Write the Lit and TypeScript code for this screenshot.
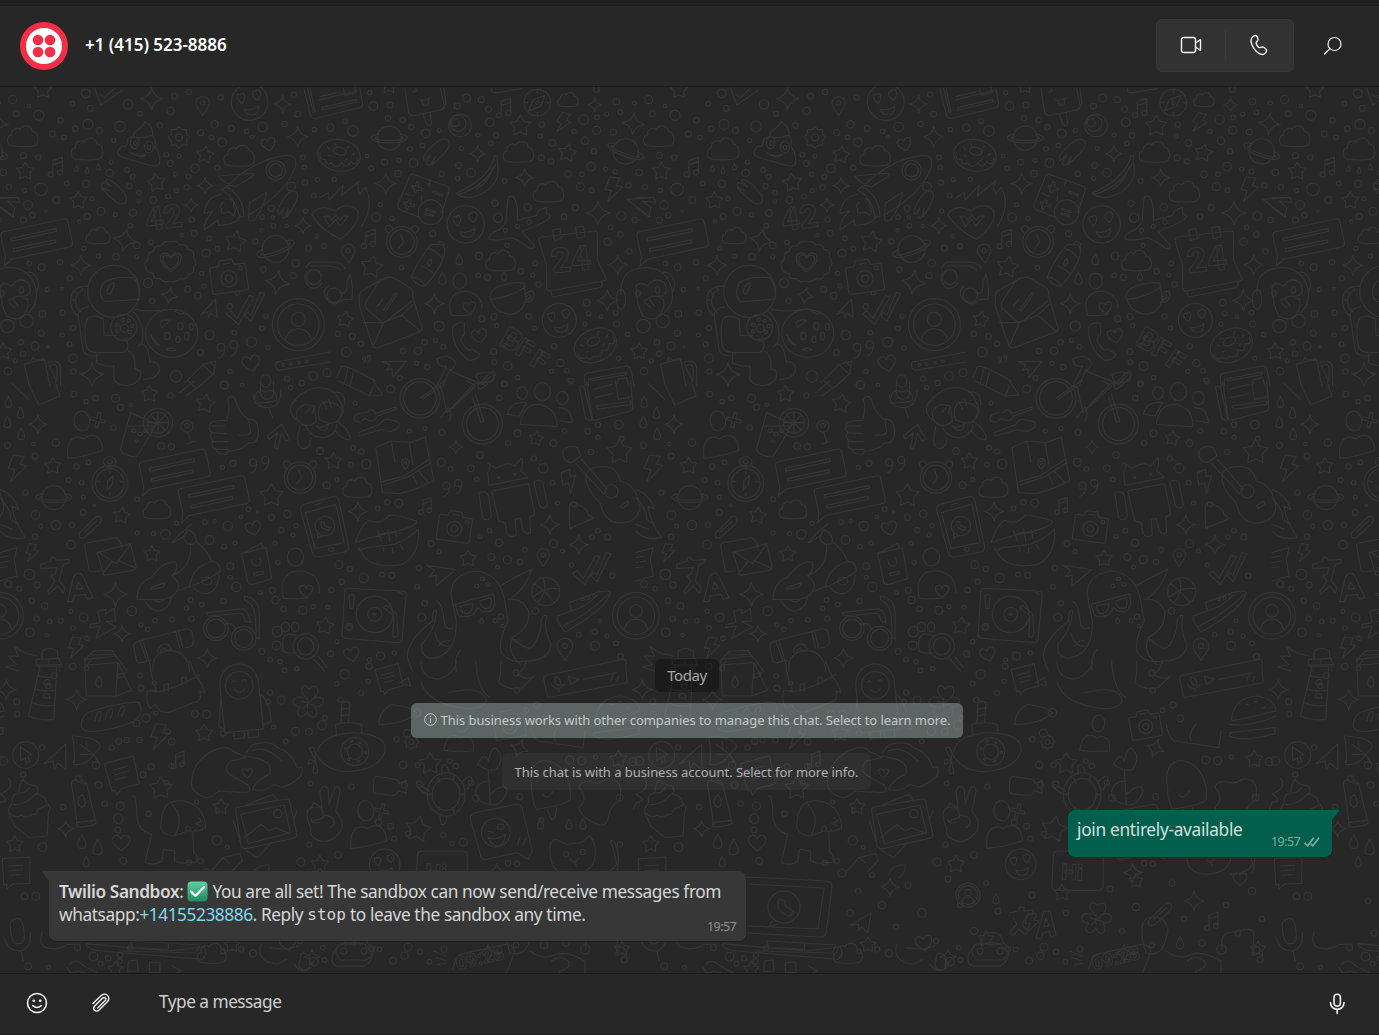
import { LitElement, html, svg, css } from "lit";
import { customElement } from "lit/decorators.js";

type Stamp = [string, number, number, number, number?];
interface Sheet {
  ox: number; oy: number; sx: number; sy: number;
  dots: number[]; stamps: Stamp[]; paths: string[];
  words?: [string, number, number, number, number][];
}

const star = (n: number, inner: number) => {
  let d = "";
  for (let i = 0; i < n * 2; i++) {
    const a = (Math.PI * i) / n - Math.PI / 2;
    const r = i % 2 ? inner : 10;
    d += (i ? "L" : "M") + (r * Math.cos(a)).toFixed(2) + " " + (r * Math.sin(a)).toFixed(2);
  }
  return d + "Z";
};
const ring = (x: number, y: number, r: number, ry = r) =>
  `M${x - r} ${y}a${r} ${ry} 0 1 0 ${2 * r} 0a${r} ${ry} 0 1 0 ${-2 * r} 0`;

/* Doodles drawn in a box of about 20 units, centred on the origin. */
const SHAPES: Record<string, string> = {
  star: star(5, 5.4),
  spark: "M0-10Q1.2-2 10 0Q1.2 2 0 10Q-1.2 2-10 0Q-1.2-2 0-10Z",
  cloud: "M-7 6.5C-11 6-11 0-7.5-.5C-8-5-3-6-2-4C0-8 6-7 6-3C10-3 11.500 5 7 6.500Q0 7.500-7 6.500Z",
  heart: "M0 9C-6 4-10 1-9.500-4C-9-9-2-10 0-4C2-10 9-9 9.500-4C10 1 6 4 0 9Z",
  drop: "M0-10C2-5 6-1 5.500 4C5 10-5 10-5.500 4C-6-1-2-5 0-10Z",
  note: "M-3 6V-6L6-9V4M-3-2L6-5" + ring(-5, 7, 2.4) + ring(3.8, 5, 2.4),
  bolt: "M-3-10L5-9L2-3L7-2L-5 10L-2 1L-7 0Z",
  pin: "M0 10C-3 4-7 1-7-3C-7-12 7-12 7-3C7 1 3 4 0 10Z" + ring(0, -3, 2.2),
  checks: "M-10 4L-7 2L-3 7L5-8L8-7L-2 11ZM2 5L4 3L6 5L12-10L15-9L6 9Z",
  love: ring(0, 0, 10) + "M-4 1C-7-1-8-5-5-4C-4-6-1-4-4 1ZM4-1C1-3 1-6 3-6C5-8 8-5 4-1ZM-3 4Q2 5 5 2Q5 7 1 7Q-2 7-3 4Z",
  planet: ring(0, 0, 10) + "M-9-3C-18-3-18 4 0 4S18-3 9-3M-10-1C-14 0-12 2 0 2S14 0 10-1",
  donut: ring(0, 0, 10, 7.4) + ring(0, -2, 3, 1.800) + "M-9 0Q-9 4-6 3Q-5 6-3 4Q0 7 2 3Q4 6 6 2Q9 4 9 0M-6-3l1 1M-3-5l1 1M4-5l-1 1M6-1l1-1M-5 1h1M3 2l1-1",
  camera: "M-10-5Q-10-6-9-6H-5L-4-9H3L4-6H9Q10-6 10-5V8Q10 9 9 9H-9Q-10 9-10 8Z" + ring(0, 1.500, 4.500) + ring(0, 1.500, 2) + ring(7, -3.500, 1) + "M-2-7H2",
  clock: ring(0, 0, 10) + ring(0, 0, 8) + "M-1-5L1 0L-2 4M-9-6C-13-9-9-13-6-9M9-6C13-9 9-13 6-9",
  person: ring(0, 0, 10) + ring(0, 0, 8) + ring(0, -2, 2.700) + "M-5 6C-4 0 4 0 5 6",
  bust: ring(0, -6, 3.500, 4.500) + "M-8 10C-8 0-3 0 0 2C3 0 8 0 8 8Q0 10-8 10Z",
  bubble: "M-9.600-3Q-9.600-4 -8.600-4H8.600Q9.600-4 9.600-3V3Q9.600 4 8.600 4H-8L-10.500 5.500L-9.600 3ZM-7-1.800H6V-1H-7ZM-7 1.200H5V2H-7Z",
  page: "M-9-9H9L8 8H-3L-7 11V8H-9ZM-5-4H4M-5-1H4M-5 2H2",
  smear: "M-9-4Q-11-8-7-7L-2-5L-7-9Q-5-12 4-5Q12 1 9 5Q6 8-2 2L-9-3L-3-2Z",
  gear: star(8, 7.500) + ring(0, 0, 3.200),
  quote: ring(-5, -3, 3) + ring(5, -5, 3) + "M-2-3Q-2 4-7 6M8-5Q8 2 3 4",
  plane: "M-10 2L8-9L5 9L0 3L-3 7L-3 1Z",
  plus: "M-1.500-8H1.500V-1.500H8V1.500H1.500V8H-1.500V1.500H-8V-1.500H-1.500Z",
  clip: "M-9 6L4-7Q8-10 9-6Q10-4 7-1L-4 9Q-10 12-9 6ZM-5 5L5-4",
  ball: ring(0, 0, 10) + "M-8-6Q0 0 6 8M-2-10Q2 0-6 8M10-2Q0-4-9 4",
  flower: "M0-2C-8-10-2-14 1-9C5-14 10-8 4-3C12-6 13 3 5 3C9 9 2 13 0 6C-4 13-10 7-5 3C-13 2-10-6-3-3M0-3V4M-4-1L5 2M4-3L-3 4",
  ghost: "M-5.500 9V-4C-5.500-12 5.500-12 5.500-4V9ZM-5.500-1L-7 7L-5.500 8M5.500-1Q8 1 8 7L5.500 8" + ring(0, -4, 3.900) + "M-2-5Q-1.500-6-1-5M1-5Q1.500-6 2-5M-1.500-3Q0-1 1.500-3M-3 9V11H0V9M1 9V11H4V9",
};

const SHEETS: Sheet[] = [
  {
    ox: 0, oy: 85, sx: 3, sy: 3,
    dots: [38,41,12,87,60,5,49,83,9,117,88,15,181,103,8,257,22,13,217,53,7,271,67,9,384,55,14,420,83,7,524,30,9,512,75,11,567,18,8,662,34,8,643,115,11,694,127,9,740,136,7,756,152,5,788,123,14,854,114,8,893,84,9,882,26,8,943,131,6,602,140,9,635,154,7,666,169,13,264,115,15,226,128,8,298,134,9,360,121,16,341,163,6,479,118,8,157,144,9,192,154,7,70,209,9,115,214,8,10,259,10,27,303,8,73,313,6,123,310,19,200,292,7,258,293,11,334,228,6,329,261,11,381,252,7,398,272,7,388,300,8,417,320,7,416,346,5,460,342,10,504,331,7,529,314,6,499,206,7,537,210,6,511,232,9,527,264,6,565,272,7,560,304,8,585,247,13,652,245,8,575,401,8,583,442,9,545,448,5,627,457,7,652,488,7,618,501,12,766,466,8,785,433,5,820,419,7,860,420,5,786,393,7,819,394,5,814,367,9,873,302,13,915,290,8,909,214,7,913,244,7,952,281,6,941,329,7,917,375,6,925,486,9,949,451,5,84,357,13,169,342,10,276,338,6,303,376,12,346,386,6,399,381,10,391,419,7,262,391,9,238,407,5,97,388,8,138,377,4,70,402,9,251,487,6,295,510,6,348,512,10,410,478,10,453,469,7,410,512,6,180,529,8,125,544,10,88,532,7,209,577,8,142,611,6,186,608,4,444,591,14,457,645,8,563,610,9,593,629,10,612,600,6,605,562,6,689,661,8,712,621,6,790,550,8,879,569,9,887,532,11,798,690,6,786,727,7,703,740,7,755,768,15,804,785,6,629,747,14,601,799,9,690,856,6,528,871,17,672,896,12,188,680,8,127,684,10,219,726,8,124,741,9,187,747,6,209,775,7,219,817,13,220,857,8,105,780,12,63,769,8,69,803,8,144,782,3,46,824,6,24,856,11,861,878,8,939,870,13],
    stamps: [["star",129,12,27],["star",76,256,28],["star",235,344,27],["star",469,290,29,-8],["star",615,207,27,8],["star",706,468,33,10],["star",10,797,26],["spark",455,38,34],["spark",848,54,26],["spark",893,153,31],["spark",615,299,25],["spark",573,357,21],["spark",375,462,35,10],["spark",243,538,30],["spark",508,629,25,10],["spark",909,419,25],["spark",832,589,36,8],["spark",276,866,36],["cloud",69,150,46],["cloud",262,188,48],["cloud",718,208,46],["cloud",295,448,36],["heart",806,175,22,-15],["heart",512,528,33],["heart",512,528,25],["heart",754,832,27,-12],["note",168,243,32],["checks",725,665,46],["drop",229,248,10],["drop",261,254,10],["drop",295,243,10],["pin",608,60,29],["love",749,48,55],["planet",827,489,40,-20],["camera",686,570,54,-8],["person",895,716,78],["bubble",110,460,107,-12],["smear",340,325,42,8],["smear",871,355,40,-95],["gear",537,154,33],["quote",682,795,38],["plane",630,672,30,-15],["bust",797,910,42]],
    paths: [
      "M284 6L302 57L368 12M300 25L312 35L342 8M0 335H55L58 350L20 345L45 365L38 392L0 365",
      "M399 152C400 130 430 130 434 106C450 118 460 125 458 148Q470 160 465 182Q483 205 478 235Q470 245 440 235L370 215Q340 205 366 180Q380 185 382 170Q380 155 399 152ZM392 200Q415 215 438 205Q430 222 392 200Z" + ring(404, 170, 13, 18) + ring(447, 183, 13, 18) + ring(406, 172, 5, 7) + ring(447, 184, 5, 7) + "M400 152Q425 160 457 148",
      "M724 263Q790 215 860 208Q895 208 885 245Q860 320 744 388M724 263L678 302Q730 330 732 390L718 394Q705 330 665 312L678 302M655 270Q700 265 757 262Q765 265 755 272L706 303Q670 290 655 270ZM800 318L748 352L746 400Q752 410 765 400Q792 365 800 318ZM665 325Q620 330 612 383L640 375Q610 405 612 432L655 402L655 418Q720 415 718 385M670 347Q655 360 665 368M688 338Q705 345 700 362Q712 368 700 390Q692 375 680 380Q660 385 665 370" + ring(827, 253, 29) + ring(827, 253, 20),
      ring(341, 616, 78) + "M417 640Q370 643 315 647Q290 625 310 590Q340 570 400 575Q420 595 417 640M322 622Q320 600 342 590Q345 600 330 625ZM262 600Q210 600 212 650Q215 680 235 690M248 612Q225 620 227 650Q230 670 243 678M213 640L227 643M220 615L234 625M243 602L249 612M235 693Q230 670 265 662M235 693L250 795Q260 812 290 810M258 775Q250 710 265 695Q290 685 310 700L312 748H350M258 775Q260 798 290 800H370Q390 790 382 767L365 762L382 755M290 800V830Q310 842 342 840V880Q350 900 385 898Q425 890 422 860Q415 848 405 850V830Q400 800 385 795M405 670Q460 680 500 670M398 675Q440 720 425 770L412 782M425 775Q445 775 450 828Q480 825 478 855Q470 880 430 880" + ring(371, 724, 39) + ring(373, 727, 12) + ring(352, 716, 5) + ring(368, 702, 5) + ring(386, 704, 5) + ring(397, 720, 5) + ring(389, 738, 5) + ring(352, 736, 5),
      ring(515, 742, 78, 72) + "M480 710Q490 698 512 703L485 725ZM453 745Q465 770 480 778Q460 778 453 745M525 675Q545 690 555 678M500 790Q515 782 528 792Q515 798 500 790" + ring(541, 720, 8, 11) + ring(502, 750, 8, 11) + ring(534, 760, 6, 10) + ring(560, 750, 6, 12) + ring(574, 722, 6, 10),
      "M437 545Q430 530 445 520Q440 500 460 496Q462 478 482 480Q495 462 510 468Q530 462 540 477Q560 472 563 490Q585 492 580 515Q595 530 580 545Q585 562 565 565Q560 585 540 577Q525 592 507 585Q490 592 480 577Q458 582 460 562Q440 562 437 545Z",
      "M-45 625Q-50 545 30 545Q85 545 105 600Q120 650 85 680M75 562Q100 550 113 582Q120 600 108 620M0 600Q10 585 35 600Q55 570 85 590Q100 620 78 630L60 630L82 640Q90 660 70 690Q50 708 20 690Q0 650 0 600M25 645Q45 630 60 630M40 640L55 660M27 650L45 665" + ring(64, 612, 7, 10) + ring(6, 622, 7, 8) + ring(22, 720, 20) + ring(80, 705, 20) + ring(-45, 640, 14, 30),
      "M73 835Q100 825 134 820L150 900M73 835L88 900M95 823L98 815L110 822L130 817L134 825M143 830Q180 815 182 850V900M150 840Q170 828 172 850L170 885L146 837M555 890L610 835L647 825L642 862L600 900M606 833L640 866M565 885L590 908M630 828L645 842M830 828L990 798M835 853L990 828M830 828Q820 840 835 853" + ring(850, 837, 4) + ring(872, 833, 4) + ring(897, 830, 4) + ring(921, 826, 4),
      "M912 8L932 90Q938 100 950 96L1083 64Q1090 60 1087 50L1080 8M923 8L940 80M930 6L945 78M960 32L1020 18M958 42L1070 14M965 65L1070 40V48L966 72ZM1030 8L1035 28L1068 20L1064 4",
      "M917 545L932 528H1000Q1030 530 1035 548M932 540H995Q1020 545 1022 555M920 555Q905 580 930 605Q955 610 965 590M985 600Q960 620 985 645Q1010 665 1030 640L1056 640Q1060 600 1050 565L1040 590Q1045 630 1020 620" + ring(942, 573, 22) + ring(1003, 628, 22),
    ],
    words: [["42", 440, 436, 96, -8]],
  },
  {
    ox: 320, oy: 85, sx: 3, sy: 3,
    dots: [149,20,6,160,60,13,210,57,9,75,105,7,31,125,11,99,135,16,204,97,8,248,102,8,274,123,8,317,142,13,358,133,6,412,60,9,440,36,12,484,41,9,506,70,9,509,109,13,474,147,6,528,148,8,513,172,7,424,187,6,307,178,7,270,189,7,280,231,13,237,223,6,194,228,9,141,210,5,154,247,7,234,263,10,43,280,6,365,264,8,416,238,9,453,260,13,413,277,6,554,285,7,181,356,6,168,394,13,216,397,6,338,443,9,12,480,7,244,545,7,477,510,11,475,568,7,502,574,9,561,478,6,602,556,8,638,567,6,646,532,7,656,595,8,525,351,9,534,395,14,623,364,11,556,433,6,592,421,6,627,408,7,732,392,8,766,365,9,781,302,12,815,313,7,744,265,10,786,265,7,813,242,13,857,249,6,886,257,7,925,298,8,664,215,9,693,226,8,822,196,8,795,164,11,697,171,10,661,150,6,665,116,8,762,136,6,791,101,14,830,133,12,831,94,7,880,138,9,860,84,6,901,79,7,943,51,6,889,47,10,829,10,9,904,390,13,944,402,8,872,424,7,901,446,8,863,467,11,928,496,8,800,650,10,806,682,7,842,692,5,887,680,7,890,714,9,795,714,6,923,745,6,896,817,6,741,854,7,752,884,8,702,781,8,721,831,11,695,856,6,643,726,6,626,691,8,563,840,13,523,828,7,521,797,9,530,719,6,522,692,9,485,698,9,593,875,6,553,893,9,358,720,15,314,769,8,347,763,6,370,782,7,294,795,11,249,795,8,289,832,6,322,843,8,239,876,7,123,773,8,97,751,9,53,744,8,79,798,14,21,860,12],
    stamps: [["star",207,0,25],["star",601,120,33],["star",742,201,28,10],["star",155,543,34,10],["star",75,701,25,8],["spark",824,57,21],["spark",940,113,33,5],["spark",473,203,24],["spark",614,275,27],["spark",197,293,32],["spark",834,381,36],["spark",893,537,30],["spark",343,653,30],["spark",862,643,32],["cloud",744,40,31],["cloud",596,197,46],["cloud",686,316,46],["cloud",542,523,45],["heart",478,750,24,-12],["heart",449,665,20,-8],["note",553,65,32],["note",147,458,32],["bolt",731,110,30,12],["bolt",881,310,37],["drop",418,521,18],["drop",367,578,20],["drop",552,571,14],["pin",85,503,29,-5],["love",437,415,56],["love",718,703,51],["planet",208,156,36],["planet",917,196,38,20],["donut",57,208,64,10],["donut",826,778,66,-25],["smear",357,200,44,-80],["clock",246,468,46],["quote",140,822,16],["plane",220,838,34,30],["clip",500,880,28]],
    paths: [
      "M255 8L266 80Q270 90 285 88L360 72Q375 70 373 60L362 8M360 75L378 55L372 8M310 86L320 115Q330 125 335 110L330 80M298 40Q310 48 328 35M305 44Q310 65 325 55V38M285 8L290 14L280 18",
      ring(420, 118, 34) + ring(414, 112, 24) + ring(406, 110, 12) + ring(652, 50, 40) + "M625 75L640 42L675 28L662 60ZM652 14V20M652 80V86M617 50h6M682 50h6" + ring(652, 50, 5),
      "M270 268Q275 263 285 267L380 300Q390 305 387 315L365 380M270 268L234 355Q232 367 242 372L300 395M330 285L325 300M305 330L303 345M258 323L280 330M277 298L286 302L290 287L298 290L295 303L307 307L304 315L292 312L287 320L281 316L284 308L276 305ZM254 348L262 350L267 340L274 343L270 352L285 357L282 363L268 360L262 370L256 367L261 357L252 354ZM340 315L368 325L366 330L338 320Z" + ring(332, 379, 37) + "M318 367L345 375V380L316 372ZM316 380L340 387V392L315 385Z",
      "M408 322Q500 280 520 225L525 208L532 210V228Q550 300 465 332Q430 340 408 322ZM415 325Q490 305 527 235M470 310Q510 285 518 245",
      "M563 345Q565 325 580 332Q595 350 592 403L650 388Q650 370 680 365V382L692 390Q690 405 605 437L640 475Q645 490 630 488Q600 465 575 455Q540 465 508 460Q500 445 540 430L558 410Z",
      "M657 463Q655 455 665 453L825 435Q833 435 832 445V520L857 575Q860 583 850 585L690 615Q680 615 680 605V540L657 463ZM693 617L697 633L840 605Q850 600 845 585M698 432L720 428L725 458L703 463ZM767 424L790 421L795 452L772 457Z",
      "M356 475Q375 475 374 495Q370 540 315 600Q295 603 273 575Q300 510 335 475ZM352 476L360 465L374 474L370 485M325 488Q345 490 365 515M305 540Q330 550 342 565M275 573Q300 575 315 598M325 540Q318 530 332 518Q340 532 325 540",
      "M118 640Q115 625 125 615L190 578Q210 570 225 578L270 605Q280 615 278 630L306 725Q308 735 298 738L175 785Q162 788 158 778L118 660ZM137 665Q133 655 140 645L175 590Q185 578 210 573M137 665L185 708Q190 712 200 705L275 645M130 710H190L160 780M185 710L245 688L300 735M245 688L280 655M172 660L188 640M190 672L228 620L232 625L196 675Z",
      ring(419, 585, 20, 24) + "M395 688Q380 645 405 625Q435 607 465 625Q490 645 485 665M395 688Q430 690 455 685",
      "M510 632Q510 612 540 600Q590 585 612 592L618 640Q610 680 570 685Q520 680 510 632ZM512 640Q570 635 616 602M616 625Q640 605 642 625Q640 650 613 648M620 632Q630 620 633 630Q630 640 618 642",
      "M398 725Q410 705 433 712V745Q415 760 430 775Q445 800 455 788L480 805Q470 825 445 822Q395 785 398 725Z",
      "M0 335L24 320L28 342L70 297L64 330L118 285Q108 305 120 325L135 303Q165 355 125 420M62 460Q0 430-25 385Q0 350 45 375Q80 345 110 370Q130 405 62 460ZM12 390L28 422L48 400L60 420L85 390H70L60 402L48 388L35 402L28 390Z",
      "M350 820Q380 800 405 825Q410 840 390 855L445 878L500 900M350 820Q355 845 380 840L350 900M390 850L370 900M468 865Q500 850 520 865Q530 885 500 890Q470 895 468 865M50 875L65 842Q80 835 165 885M83 850L72 895M100 858L90 900",
      "M795 900L793 875Q793 865 800 862L920 840Q930 840 933 850L942 900M805 900V880L918 858V866L812 885M890 895L895 880L920 875L925 895",
      "M515 8Q510 20 530 20L605 8M920 340L990 335M920 340L990 392",
    ],
    words: [["24", 696, 562, 104, -6], ["B", 535, 775, 90, 28], ["F", 582, 802, 80, 30], ["F", 625, 835, 80, 32]],
  },
  {
    ox: 0, oy: 380, sx: 2.45, sy: 3,
    dots: [181,39,9,234,51,8,211,62,6,283,52,12,295,79,9,320,71,5,418,44,8,550,13,12,593,12,5,712,20,6,957,24,12,870,66,6,739,6,8,1236,10,7,1223,51,8,1398,5,4,1383,150,7,1440,151,8,1465,131,8,1516,131,13,1523,173,7,1465,169,6,1356,187,10,1448,213,8,1268,157,10,1245,186,8,1083,154,9,1041,142,6,1003,150,6,1176,222,10,1081,244,12,1104,264,7,1153,262,10,1168,295,7,1308,233,8,1331,262,14,1354,305,7,1366,366,6,865,200,7,885,212,8,784,210,10,897,249,14,860,251,7,825,296,6,800,313,10,704,399,11,665,409,9,631,393,4,609,385,7,590,408,5,689,447,8,725,434,6,718,462,6,674,487,6,558,435,14,513,477,13,526,421,5,502,423,7,432,427,6,405,460,14,376,458,6,336,456,6,336,355,7,204,394,9,231,373,4,204,348,6,168,297,7,200,305,7,187,257,8,217,244,7,86,225,9,62,335,8,87,402,13,137,432,14,99,435,6,176,432,8,86,467,8,174,491,13,137,185,11,82,189,5,18,193,9,278,140,8,395,195,10,420,197,9,571,247,9,545,259,6,72,580,16,20,609,10,91,612,9,47,623,7,78,659,8,109,675,10,174,691,6,90,713,8,122,722,6,149,719,7,205,709,13,179,741,7,73,754,13,114,762,5,213,772,7,178,856,10,323,690,14,345,731,6,362,745,7,380,718,7,421,716,7,469,713,8,457,682,6,467,657,7,494,670,7,548,660,8,579,618,14,564,555,10,564,588,6,576,486,6,549,497,7,681,544,6,675,657,11,638,634,6,667,628,9,695,684,8,742,688,12,767,677,6,803,679,6,812,627,8,837,602,8,830,551,12,857,564,8,891,591,14,936,581,7,960,583,9,1026,561,8,1076,512,6,1056,488,9,1022,617,7,1041,667,8,1033,709,12,977,366,12,949,364,8,925,382,7,856,738,10,825,782,6,810,818,9,642,811,9,662,836,7,686,842,6,726,863,6,905,836,6,932,825,12,966,816,6,1204,528,10,1243,536,12,1274,543,8,1219,558,6,1223,485,11,1176,466,6,1199,449,7,1286,506,7,1356,488,12,1400,552,6,1465,449,7,1450,468,7,1489,468,9,1500,584,8,1312,690,10,1378,510,6,1232,735,5,1227,707,8,1213,719,6,1457,752,8,1418,761,7,1458,794,13,1487,765,6,1509,787,7,1470,719,5,1520,827,9],
    stamps: [["star",366,39,26],["star",503,68,29,10],["star",129,255,26],["star",298,404,26,8],["star",372,519,25],["star",665,344,36],["star",817,241,26],["star",1314,173,23,10],["star",1518,213,39],["star",1147,533,26],["star",796,735,27,8],["spark",93,130,28],["spark",1117,198,21],["spark",877,391,29],["spark",1347,431,29],["spark",1418,491,29],["spark",283,640,36],["spark",299,758,25],["spark",508,831,29],["cloud",876,318,44],["cloud",385,384,42],["heart",621,442,24,-15],["heart",862,820,24,-15],["heart",750,630,21],["note",1043,374,28],["bolt",43,262,40],["bolt",79,515,27],["bolt",186,800,32],["bolt",1396,300,34,-30],["drop",18,124,19],["drop",50,97,18],["drop",52,160,19],["drop",20,64,18],["drop",1180,719,10],["pin",1331,530,27],["pin",1384,805,34],["checks",1440,560,46],["planet",132,350,36],["camera",1114,436,50,8],["clock",735,290,47],["person",1558,704,70],["bubble",428,265,106,-12],["bubble",524,345,106,-12],["bust",204,160,67,-6],["quote",635,255,36],["quote",1108,325,36],["plane",1075,573,42,40],["plus",240,117,28,15],["clip",221,435,36],["ball",1337,632,42]],
    paths: [
      "M30 8L70 55M70 8L95 72L147 45L135 0M440 35L475 0M455 45L500 5M638 0V35Q640 55 655 55Q672 52 670 30V0M620 42Q625 80 655 80Q690 78 688 25M658 80L668 110M830 0L905 45L938 42L915 0M905 45L915 15",
      "M320 95L295 205Q300 225 335 228L383 130ZM310 135H378" + ring(328, 149, 5) + ring(343, 159, 5) + ring(357, 149, 5) + ring(334, 181, 4) + ring(387, 125, 36, 43) + ring(387, 125, 26, 32) + "M387 95V155M362 125H412M370 103L404 147M404 103L370 147",
      ring(458, 136, 15, 17) + ring(458, 133, 6) + "M460 153L468 185M458 188L478 180",
      "M515 130Q515 118 555 118Q565 80 557 55Q570 35 578 60Q582 90 608 115Q635 110 633 160Q630 190 610 185Q590 210 560 210L555 220Q530 220 530 205Q515 200 522 180Q510 165 520 155Q510 145 515 130ZM518 135H550M520 155L555 158M520 182L558 182M533 205L560 205M610 118L614 155Q605 165 585 162",
      "M655 165L690 130L710 175L700 180L690 155L680 205L672 200L680 155L660 175Z",
      "M725 115Q700 90 722 58Q750 20 780 20Q820 20 832 60Q850 90 830 115M712 80Q715 55 728 60M815 35Q845 25 845 70M728 115Q720 80 750 70L770 75L775 120Q760 140 740 130ZM782 115Q775 80 790 65Q830 60 838 90Q830 140 795 122ZM750 135Q760 170 795 170Q825 160 825 130M735 135Q720 200 745 203Q760 200 762 170M825 120Q860 150 857 175Q840 180 822 150M775 135Q790 145 805 128Q800 165 775 135M750 95L760 80M765 98L770 78M790 60L800 85M805 55L812 80",
      "M868 110Q870 95 900 95Q912 75 920 98L970 78V85L925 105Q915 130 895 112Q880 130 868 118ZM878 155L930 130Q940 108 960 118Q985 120 975 140Q955 160 935 145L880 165Z",
      ring(1029, 52, 49, 59) + ring(1029, 52, 40, 50) + ring(1182, 129, 49, 60) + ring(1182, 129, 39, 50) + "M1029 52L1090 0M1035 55L1080 15L1095 95L1160 10L1140 0M1100 90L1165 15M1158 50L1178 125L1185 120L1165 40M1080 110Q1090 90 1100 80Q1110 100 1100 120M1160 10L1205 0",
      ring(1279, 36, 13, 19) + ring(1329, 32, 20, 27) + ring(1378, 51, 14, 20) + "M1275 130Q1280 70 1320 70Q1365 80 1365 137ZM1243 100Q1250 60 1290 65L1272 105ZM1368 80Q1400 80 1402 125L1372 120",
      "M1420 20Q1420 10 1432 20L1450 115Q1445 122 1435 112ZM1437 5L1452 115Q1455 120 1465 115L1545 90Q1552 85 1550 75L1545 0M1455 25L1500 10M1458 50L1500 38M1460 75L1545 60V70L1465 85ZM1508 0L1515 55L1545 48",
      "M921 200L958 180L1005 185L1042 168L1063 300L1015 325L980 338L937 335ZM958 180L968 245M1002 185L1012 250M937 302L990 285L1052 235M940 312L1000 288L1055 245M1010 280L1022 310M1025 270L1050 305M993 265Q975 240 993 233Q1012 240 993 265" + ring(993, 245, 4),
      "M1198 313L1195 275Q1205 250 1195 246L1215 262Q1245 240 1260 255L1277 232Q1285 240 1275 270Q1290 280 1293 290ZM1205 330L1295 308L1310 400L1298 408L1300 455Q1290 462 1282 450L1275 412L1262 415L1265 462Q1250 475 1242 455L1237 425L1222 420ZM1173 335Q1190 325 1197 345L1204 405Q1195 425 1182 410ZM1308 305Q1320 290 1330 305L1341 370Q1335 390 1322 375Z" + ring(1222, 290, 3) + ring(1261, 280, 3),
      "M1380 210Q1390 190 1415 200L1423 225L1400 245Q1375 240 1380 210ZM1425 235L1488 325M1410 247L1480 340M1435 285Q1440 255 1480 257Q1510 255 1520 300Q1560 310 1568 380Q1560 430 1510 425Q1480 420 1470 365Q1435 325 1435 285ZM1520 375L1538 360L1540 370L1525 382Z" + ring(1498, 331, 16, 20),
      "M1395 375Q1400 355 1413 370Q1440 380 1440 400L1453 412L1397 442Q1393 410 1395 375" + ring(1406, 370, 7),
      ring(269, 307, 44, 54) + ring(269, 307, 35, 44) + ring(269, 242, 15) + ring(269, 242, 6) + "M262 328L264 300L278 283L275 310ZM269 270V278M269 335V345M238 300L245 303M293 300L300 303",
      "M737 390Q735 375 745 370L815 347Q828 345 830 358L854 495Q855 510 845 513L780 528Q768 528 765 515ZM748 395L823 370L843 485L772 503ZM772 372L788 366" + ring(811, 505, 6) + ring(796, 435, 24, 29) + "M778 458V472L788 464M787 420Q783 445 805 448L808 440L800 436Q792 432 794 424Z",
      "M870 485Q890 420 905 418Q930 435 955 402Q985 405 1020 420Q1025 435 960 455Q930 460 870 485ZM880 500Q870 515 900 500L965 490Q1000 475 1025 445Q1030 520 985 550Q900 570 880 500ZM930 460Q960 450 980 458M925 450L935 480M950 445L955 480M968 445L972 470M940 500V510M962 500V515M980 490L988 505",
      "M208 500Q205 490 215 485L285 470L296 485L298 500M208 500L218 565Q220 575 230 572L245 570M238 515L320 488L333 555Q333 565 325 568L255 583L238 515ZM240 512L285 548L320 490M250 580L275 540M292 540L330 560",
      "M0 325Q35 340 45 385L30 375Q30 410 62 470Q20 480 0 450M0 350Q30 390 25 415L45 430M0 430L30 445",
      "M0 515L42 500L35 535L42 585L0 600M0 530L20 525M0 545L22 540M0 560L18 558",
      "M100 550L125 540V530Q135 525 138 538L170 535Q170 550 155 550L145 600L160 620L155 635L140 615L120 640L117 632L135 600L125 585L135 580L140 560L100 562Z",
      "M166 662L180 588Q188 570 200 580L228 650L214 655L208 640L182 644L178 662ZM187 625L192 602L202 622Z",
      "M240 690L260 685L258 700L280 682L283 720L260 722L285 738L235 772L245 735L220 740L222 730L245 725Z",
      "M335 655Q340 600 370 590Q400 540 430 543Q440 565 420 585Q440 600 437 620Q430 650 400 655ZM370 620L405 605L400 618L370 625ZM355 660Q370 690 390 690Q415 685 420 650M375 655Q390 670 402 655M420 585Q470 560 467 495M437 630L465 615Q470 560 520 540Q540 545 540 570Q520 590 465 618M475 620Q490 640 507 638Q535 630 537 580M460 445Q485 460 480 485Q460 500 450 470ZM422 485L440 460L470 428M425 485L450 465M482 483Q510 510 518 540" + ring(507, 600, 12),
      "M592 518L640 487L645 502M592 518L607 603Q610 612 620 610L660 595Q667 593 665 585L652 500ZM617 535Q615 555 632 555Q645 545 635 530M620 578L645 570V578L624 585Z",
      ring(724, 528, 20, 27) + "M695 652Q682 600 710 575Q740 560 770 585Q785 610 783 635M695 652Q725 656 755 650",
      "M845 630Q845 622 855 622L985 630Q995 632 995 640L985 775Q985 785 975 785L848 772Q838 770 838 760ZM855 645Q862 635 868 645L865 680Q860 685 857 678Z" + ring(918, 700, 45, 55) + ring(918, 700, 17, 21) + ring(918, 700, 3) + ring(856, 739, 7) + "M940 680Q945 670 950 675L972 700L975 760Q970 775 962 765L965 705ZM972 628L985 640",
      "M1105 640Q1105 580 1165 570Q1220 575 1235 650L1245 720Q1220 780 1228 815Q1250 850 1290 840Q1345 840 1350 790Q1330 740 1340 705Q1325 695 1325 740Q1310 810 1290 800Q1250 775 1255 770Q1300 740 1295 690Q1280 650 1245 655M1105 640L1118 720Q1120 820 1060 832Q1030 830 1033 790Q1065 750 1070 690Q1060 680 1060 720Q995 780 998 830L1010 870M1070 660Q1085 670 1088 720Q1090 750 1110 740M1225 615L1260 590L1303 565Q1290 620 1250 655M1115 670L1210 638L1212 670Q1205 700 1180 690L1170 680L1160 700Q1130 715 1122 700ZM1128 675Q1130 700 1145 698Q1160 690 1158 668ZM1175 660Q1180 690 1200 680Q1205 665 1202 650ZM1065 755Q1075 800 1100 795M1100 780Q1085 775 1075 795M1130 805Q1110 830 1118 870M1255 775Q1240 810 1275 850M1275 790Q1262 770 1255 775" + ring(1182, 593, 5) + ring(1196, 610, 5) + ring(1168, 615, 5),
      "M1365 705L1400 690L1395 665L1460 635Q1490 625 1495 635Q1490 680 1385 753Q1380 750 1365 715ZM1380 735Q1440 700 1490 640M1400 690Q1440 675 1465 640" + ring(1428, 655, 4) + ring(1442, 650, 4) + ring(1456, 645, 4),
      "M505 695L595 683Q610 690 613 725L600 720Q598 695 585 697L510 705ZM598 645Q635 650 635 700V775L628 770L625 700Q620 665 600 658ZM550 730Q570 720 578 745" + ring(529, 742, 30, 36) + ring(529, 742, 23, 28) + ring(597, 772, 30, 36) + ring(597, 772, 22, 28),
      ring(749, 796, 31, 38) + ring(749, 796, 20, 26) + ring(679, 752, 12, 16) + ring(678, 793, 11, 13) + ring(699, 738, 10, 14) + ring(723, 738, 9, 14) + "M730 765Q700 750 693 775V810Q705 820 725 815M770 835L795 870M780 825L802 860",
      "M328 800Q325 785 340 780L450 745Q470 740 472 760L474 785Q470 800 455 800M328 800L335 840Q340 850 355 842L370 838M343 780L360 840M350 778L365 838M430 750L440 800M437 748L447 798M385 815Q390 785 410 790Q418 795 420 810M392 812Q400 795 412 812M375 870Q370 815 415 808Q460 810 465 870",
      "M208 870V835L285 825L312 870M208 835L230 810L275 808L285 830M225 822L278 820M34 795Q60 820 75 820L90 825M34 795L45 825L20 825L40 850L15 858L45 870M88 835L145 832L150 850L90 852ZM103 830V810Q120 795 140 810L142 830M95 855L98 870M145 850V870M120 835V850",
    ],
  },
  {
    ox: 0, oy: 660, sx: 2.376, sy: 3,
    dots: [40,122,9,115,75,8,129,44,9,41,159,8,100,259,8,55,341,8,8,300,13,205,22,7,333,44,7,335,81,9,367,66,6,347,171,12,370,156,6,324,187,10,331,237,8,301,237,8,282,241,9,265,260,8,463,159,10,491,160,12,398,212,8,408,242,10,530,217,8,359,317,9,407,315,8,340,341,9,228,313,11,234,372,10,150,438,8,249,428,8,286,435,12,281,473,14,280,507,9,293,600,10,353,458,8,396,366,7,447,503,7,467,423,6,516,447,6,515,538,14,540,559,6,477,600,8,449,605,8,101,558,13,668,117,12,642,95,8,637,122,7,676,28,7,706,23,6,819,40,14,800,68,7,809,116,8,858,96,8,875,61,6,877,16,9,772,171,7,765,193,13,702,211,12,734,212,10,679,241,7,650,198,6,942,235,8,968,217,12,990,155,12,958,311,11,992,312,8,1069,300,7,1083,315,8,928,496,9,899,484,9,937,533,8,970,518,8,961,372,9,997,370,10,835,377,8,738,367,7,735,551,8,803,582,10,715,603,12,1053,522,8,1074,548,6,1101,544,12,1131,411,10,1119,366,8,1235,407,9,1286,477,7,1354,297,12,1382,299,12,1415,288,6,1504,302,12,1276,132,9,1251,148,7,1228,88,8,1226,36,9,1293,172,10,1473,550,8,1472,410,10,1207,607,8,1228,608,8,58,706,10,85,706,12,184,860,9,222,887,13,239,908,7,257,892,8,284,901,8,309,861,7,67,916,10,115,919,6,573,865,8,601,877,11,530,871,7,934,899,10,961,884,11,998,872,8,1020,902,7,902,865,7,767,860,7,746,902,13,771,897,7,1391,865,14,1475,867,10,1483,896,9],
    stamps: [["star",485,217,27],["star",382,382,36],["star",525,438,25],["star",35,550,26],["star",1022,308,34],["star",993,505,40,10],["star",1469,295,27],["star",760,610,27],["star",274,925,24],["spark",15,86,30],["spark",182,116,31],["spark",156,503,25],["spark",1234,262,28,20],["spark",1180,635,28],["heart",288,545,27],["heart",588,336,16],["note",424,296,28],["bolt",380,226,38],["drop",194,543,23],["drop",232,560,25],["drop",205,603,17],["drop",1284,490,17],["drop",1352,490,17],["drop",1385,490,17],["love",914,610,46],["camera",1210,190,46,-10],["bust",872,490,68,-5],["bust",1095,220,55,8],["flower",731,125,45],["ghost",572,115,106,-6],["page",292,340,50,-15],["page",40,632,46,-3],["page",926,52,40,-15],["plane",135,293,42,-10],["plus",907,450,27,15],["gear",978,243,22]],
    paths: [
      "M88 15H147M95 15L68 165Q95 180 128 175L135 15M92 45Q110 52 135 48M85 85Q105 92 132 88M78 125Q100 140 130 132M105 70V62Q110 50 118 60V72ZM103 110V102Q110 92 118 102V112Z",
      "M202 12L280 5L312 88L275 105L205 105ZM215 0L202 20M280 5L275 105M235 45Q220 70 235 80Q250 70 235 45ZM280 40L298 35L295 45L280 52Z",
      "M355 0Q360 60 372 88L350 90Q345 130 358 142L370 130Q375 155 400 155L470 120Q480 110 475 90L487 95Q480 65 465 45L450 0M365 92Q400 95 475 40M390 90V70L400 68V90M432 72V50L442 48V68",
      "M193 195Q195 155 220 150Q300 120 330 125Q345 150 320 180Q280 205 215 212Q195 210 193 195ZM225 180Q230 150 238 152Q245 160 235 180M250 175Q255 145 265 142Q272 150 262 172M280 165Q285 135 293 135Q300 145 288 165",
      ring(61, 282, 31, 40) + "M48 258L75 280L66 285L70 302L62 304L60 290L50 298ZM172 225Q240 230 238 260L222 280L238 310M172 225Q180 270 175 310Q205 315 222 280M190 250L222 280M205 245L207 262M190 280L215 280",
      "M455 360Q460 290 520 262Q545 255 555 272L585 290L548 300Q530 320 545 340L590 372Q600 395 580 395L520 390Q500 415 485 408Q450 390 455 360ZM585 275L600 252Q640 235 660 260Q695 275 705 320Q725 310 715 345Q690 375 670 378L650 370Q630 395 600 385Q610 355 640 340Q650 310 620 295L585 285M600 270Q630 250 670 300",
      "M752 280Q760 220 840 215Q920 220 915 270Q900 330 820 332Q770 325 752 280ZM800 225L797 190Q830 180 858 190L860 215M810 185L812 125Q820 118 832 125L828 185M810 145L832 140M810 165L830 160M750 300L735 262Q745 255 748 265ZM750 300L733 310Q730 290 750 300ZM750 300L755 335Q740 345 745 320Z" + ring(843, 272, 33, 42) + ring(843, 272, 18, 23) + ring(820, 262, 3) + ring(835, 240, 3) + ring(855, 245, 3) + ring(868, 275, 3) + ring(852, 300, 3) + ring(828, 295, 3),
      "M888 355Q890 345 900 347L940 355Q948 358 948 368L965 358V398L946 388L943 398Q940 405 930 403L893 398Q885 395 887 385Z",
      ring(1060, 400, 45, 65) + ring(1060, 400, 33, 48) + "M1040 350L1045 365M1080 345L1075 360M1105 400H1092M1015 400H1028M1040 450L1045 438M1080 455L1075 440M1050 340V315Q1060 300 1068 335M1100 360L1115 345Q1130 350 1110 385M1020 390L995 370Q985 380 1015 400M1045 462L1048 490Q1060 495 1062 465",
      "M315 405Q325 400 325 470Q330 510 360 520L345 605Q370 615 385 600L388 565L415 570V598Q430 612 445 605H465Q475 590 460 572L458 515L465 505M382 490Q385 430 410 422Q440 410 470 440Q490 470 488 500Q470 515 445 510L415 525Q380 520 382 490ZM408 430Q440 470 415 525M470 470L480 480L465 488L478 495",
      "M560 450Q558 440 568 438L675 415Q685 412 688 420L705 520Q705 530 697 532L585 563Q575 563 573 555ZM572 460L675 432L690 515L590 548ZM580 530L620 490L640 510L655 500L688 518M580 435L648 400L660 418M555 480L570 540M580 565L612 590L645 545M705 450L697 480" + ring(660, 458, 10, 12),
      "M738 500Q720 450 740 440L745 425L765 440L760 390Q770 365 780 385L782 430L795 380Q805 370 808 390L798 450Q820 480 810 510Q780 560 745 530Q735 520 738 500M740 440Q770 430 768 470L745 480M768 460L790 470Q800 490 785 500M740 475Q740 490 760 485",
      "M1118 475Q1115 460 1130 455L1225 430Q1238 430 1240 440L1265 570L1255 595L1230 575L1155 595Q1145 598 1142 585ZM1160 530Q1180 540 1200 520Q1200 555 1180 555Q1165 550 1160 530M1158 510L1172 515M1230 550L1235 530M1242 555L1250 530" + ring(1178, 515, 34, 43) + ring(1190, 497, 8),
      "M1310 600Q1300 540 1320 535L1345 550L1380 545L1402 525Q1420 550 1412 600Q1400 640 1350 640Q1315 635 1310 600ZM1412 640Q1450 640 1465 610Q1460 570 1450 540Q1465 530 1470 600L1465 635M1355 595L1365 605L1375 592M1365 605L1370 615" + ring(1345, 580, 6, 8) + ring(1385, 573, 6, 8),
      "M20 455Q20 440 30 425Q25 400 45 395Q45 370 55 355Q60 370 85 375Q95 390 85 398Q110 405 110 425Q125 440 115 455L112 525L70 530L35 495ZM22 455Q40 475 50 462Q60 475 75 460Q85 465 90 445L115 430M32 430Q60 435 85 398M45 395Q60 400 70 380",
      "M170 370Q170 355 180 358V345H193V358Q205 360 207 375L228 485Q225 495 185 498ZM178 358Q190 365 207 370M188 410Q180 430 195 440Q210 430 195 400ZM182 495V485L225 478",
      "M1003 570H1100Q1112 572 1110 585V675Q1108 688 1098 688H1000Q988 686 988 674L992 580Q993 570 1003 570ZM500 632L530 590L570 578L575 600L550 632M530 590L545 605M600 640Q610 610 640 612Q640 640 625 650",
      "M1292 55Q1290 45 1300 42L1480-5Q1490-5 1487 10L1490 65L1310 108Q1300 110 1300 100ZM1318 60V50Q1325 45 1330 55L1334 70Q1325 80 1318 60M1310 70Q1325 95 1340 70M1328 83V92M1350 45L1375 55L1357 70ZM1385 55L1465 35M1450 60L1458 40M1465 60L1470 45",
      "M1415 175Q1420 110 1475 105Q1520 115 1520 150L1418 180ZM1410 190Q1460 200 1520 165M1410 225Q1440 245 1518 218V200L1412 215ZM1260 190Q1265 230 1280 240L1385 260L1390 210M1330 190Q1310 220 1320 240M1450 130h5M1470 122h5M1490 140h5",
      "M1135 310Q1150 270 1160 300Q1170 250 1180 265Q1200 290 1180 325Q1160 335 1135 310M1160 325L1165 430M1165 360Q1130 360 1130 400Q1140 430 1165 430Q1190 440 1205 390Q1200 360 1165 400M1262 370Q1255 310 1290 298Q1340 300 1355 380V415Q1350 430 1275 445Q1265 430 1262 370ZM1300 445L1310 475Q1320 480 1322 440M1290 400Q1300 420 1315 390",
      "M1375 380Q1380 360 1400 360Q1420 375 1440 355Q1485 350 1472 420Q1450 430 1445 470Q1440 500 1420 490Q1380 470 1375 440Q1400 410 1375 380M1505 445L1511 425Q1540 420 1511 400Q1550 380 1530 350",
      "M25 800Q20 775 42 772Q58 775 58 835Q50 850 38 848Q25 835 25 800M10 828Q15 870 50 870Q75 860 72 815M50 870L55 900M100 815Q90 850 110 860Q140 870 160 850L190 850M205 848L400 870L485 858Q495 880 480 895L240 870Q205 865 205 848ZM310 840L315 860L400 865V850",
      "M305 900L325 897L328 930L303 932ZM355 905L380 903V935H355ZM410 915L430 930L405 945M165 910Q180 890 200 915L230 935M160 920Q165 945 185 930L225 945M620 850Q610 890 640 905L660 910L680 895M715 880Q720 870 735 885V920Q725 940 710 915ZM700 910Q710 940 740 920M725 935V945M790 880L805 850Q850 840 865 850L880 870Q890 900 865 915H800Q785 910 790 880ZM640 860L680 865L710 855",
      "M1075 925L1085 890Q1090 880 1100 878L1200 850Q1220 850 1222 870L1215 900L1200 945M1030 870L1060 885M1035 890L1058 898M1040 910L1060 908M1260 870Q1290 900 1320 880Q1350 870 1390 900V945M1310 900Q1330 880 1350 900Q1360 920 1330 930V945",
      "M1000 0Q1000 50 1040 55Q1080 40 1085 0M1065 95Q1150 70 1155 120Q1140 160 1060 130Q1010 110 1000 60M1130 0Q1135 90 1165 110M1190 0Q1190 50 1185 65Q1210 90 1240 80L1270 45Q1250 60 1230 40Q1250 20 1250 0M900 190Q900 150 930 130L970 140L990 155Q960 190 900 190M950 65L970 50L975 75L960 70",
    ],
    words: [["Hi", 1010, 655, 66, 3], ["09:28", 1087, 928, 56, -14]],
  },
  {
    ox: 0, oy: 860, sx: 1, sy: 1,
    dots: [206,12,12,222,30,8,214,52,10,236,14,7,246,44,11,260,66,8,272,24,9,286,52,13,300,80,8,312,18,9,324,44,8,338,70,11,350,22,7,362,50,9,372,88,8,396,34,9,408,86,12,430,52,8,444,88,9,474,28,9,486,70,8,500,46,11,516,84,8,536,22,9,548,58,8,566,82,10,590,44,8,602,72,9,616,30,11,626,58,8,96,40,8,102,72,9,120,94,8],
    stamps: [["star",350,78,25],["star",426,32,26],["star",232,84,24],["star",500,20,22],["star",622,88,24],["spark",254,26,28],["spark",312,96,24],["spark",488,92,26],["spark",558,40,30],["flower",460,58,44],["heart",288,82,26,-10],["heart",604,18,22],["clip",524,52,38],["person",332,34,36],["bolt",396,62,30],["note",576,60,30],["cloud",212,92,44],["plane",226,62,34],["drop",360,38,17],["drop",544,82,20]],
    paths: [
      "M108 20Q108 16 112 16L190 20Q196 20 196 26L190 72Q189 76 184 76L112 72M114 23L188 27L182 68L112 65M132 80L200 84L196 92L120 90" + ring(148, 46, 16) + "M136 60L133 66L142 63M143 38Q139 52 154 55L158 51L153 47Q148 46 149 40Z",
      "M374 52L383 50V46L388 46V50L397 49V53L391 54L386 64L392 70L389 74L383 68L377 75L374 71L381 63L377 57M400 77L408 50H414L420 74L415 76L413 70L407 72L405 78ZM408 66L410 57L413 65Z",
      "M336 92Q336 84 344 83L348 74Q356 69 364 74L368 83Q376 86 372 95L366 99H340ZM346 83H366" + ring(344, 90, 3) + ring(364, 90, 3),
      "M510 92Q500 60 514 56Q530 54 532 70L528 84Q522 96 510 92ZM586 88Q584 74 592 72L612 68Q618 68 618 76L616 94",
    ],
  },
];

const drawSheet = (s: Sheet) => {
  const X = (x: number) => s.ox + x / s.sx;
  const Y = (y: number) => s.oy + y / s.sy;
  let rings = "";
  for (let i = 0; i < s.dots.length; i += 3) {
    rings += ring(+X(s.dots[i]).toFixed(2), +Y(s.dots[i + 1]).toFixed(2), +(s.dots[i + 2] / 3).toFixed(2));
  }
  return svg`
    <path d=${rings}></path>
    ${s.stamps.map(([k, x, y, r, a = 0]) => svg`<path d=${SHAPES[k]} transform=${`translate(${X(x)} ${Y(y)}) rotate(${a}) scale(${r / 30})`}></path>`)}
    ${s.paths.map((d) => svg`<path d=${d} transform=${`translate(${s.ox} ${s.oy}) scale(${1 / s.sx} ${1 / s.sy})`}></path>`)}
    ${(s.words ?? []).map(([t, x, y, z, a]) => svg`<text font-size=${z / 3} transform=${`translate(${X(x)} ${Y(y)}) rotate(${a})`}>${t}</text>`)}
  `;
};

@customElement("chat-wallpaper")
class ChatWallpaper extends LitElement {
  static styles = css`
    :host { display: block; overflow: hidden; }
    svg { display: block; width: 1379px; height: 887px; }
    .ink { fill: none; stroke: #353535; stroke-width: 1.25; stroke-linejoin: round; stroke-linecap: round; }
    .ink path { vector-effect: non-scaling-stroke; }
    .ink text { font-family: Roboto, sans-serif; font-weight: 900; stroke-width: 1; }
  `;
  render() {
    return html`<svg viewBox="0 86 1379 887" aria-hidden="true">
      <defs><g id="tile" class="ink">${SHEETS.map(drawSheet)}</g></defs>
      ${[-636, 0, 636, 1272].map((x) => svg`<use href="#tile" x=${x}></use>`)}
    </svg>`;
  }
}

@customElement("app-root")
class AppRoot extends LitElement {
  static styles = css`
    :host {
      display: flex; flex-direction: column; width: 100%; height: 100vh; overflow: hidden;
      box-sizing: border-box; background: #272727; color: #d6d6d6;
      font-family: "Noto Sans", "Open Sans", sans-serif;
    }
    svg { display: block; }
    .strip { height: 6px; flex: none; background: #202020; border-bottom: 1px solid #1d1d1d; box-sizing: border-box; }
    header { flex: none; height: 81px; box-sizing: border-box; display: flex; align-items: center; padding: 0 36px 1px 20px; border-bottom: 1px solid #1b1b1b; }
    .name { margin-left: 17px; flex: 1; color: #fff; font-size: 17px; font-weight: 600; letter-spacing: -0.02px; line-height: 24px; padding-bottom: 2px; }
    .calls { display: flex; align-items: center; width: 138px; height: 53px; padding-bottom: 2px; box-sizing: border-box; background: #323232; border: 1px solid #363636; border-radius: 6px; margin-right: 28px; }
    .call { flex: 1; display: flex; justify-content: center; }
    .rule { width: 1px; height: 30px; background: #3a3a3a; }
    .icon { fill: none; stroke: #f2f2f2; stroke-width: 1.4; stroke-linecap: round; stroke-linejoin: round; }
    .thin { stroke-width: 1.2; }
    .bold { stroke-width: 1.6; }
    main { flex: 1; min-height: 0; position: relative; display: flex; flex-direction: column; justify-content: flex-end; padding-bottom: 32px; box-sizing: border-box; }
    chat-wallpaper { position: absolute; inset: 0; }
    .pill { position: relative; align-self: center; margin-right: 5px; display: flex; align-items: center; justify-content: center; border-radius: 6px; box-sizing: border-box; white-space: nowrap; font-size: 13px; color: #b0b0b0; }
    .day { width: 64px; height: 33px; padding-bottom: 2px; background: rgba(0, 0, 0, 0.3); font-size: 15px; letter-spacing: -0.4px; color: #a8a8a8; }
    .info { width: 552px; height: 35px; padding-bottom: 2px; margin-top: 11px; background: rgba(143, 165, 161, 0.5); color: #c3c9c8; gap: 4px; letter-spacing: -0.07px; }
    .info svg { stroke: #c3c9c8; fill: none; }
    .biz { width: 369px; height: 37px; margin: 15px 6px 0 0; background: rgba(255, 255, 255, 0.04); letter-spacing: -0.05px; }
    .msg { position: relative; box-sizing: border-box; border-radius: 7px; font-size: 17.300px; line-height: 23px; white-space: nowrap; box-shadow: 0 1px 1px rgba(0, 0, 0, 0.2); }
    .out { align-self: flex-end; width: 264px; height: 47px; margin: 20px 47px 0 0; padding: 8px 9px; background: #025e4d; color: #d3e2de; letter-spacing: -0.31px; display: flex; border-top-right-radius: 0; }
    .in { width: 697px; height: 70px; margin: 14px 0 0 49px; padding: 9px 10px; background: #373737; letter-spacing: -0.41px; border-top-left-radius: 0; }
    .tail { position: absolute; top: 0; }
    .out .tail { left: 263px; fill: #025e4d; }
    .in .tail { left: -7px; fill: #373737; }
    .time { position: absolute; font-size: 12.500px; line-height: 16px; letter-spacing: -0.6px; color: #8f8f8f; right: 10px; bottom: 6px; display: flex; gap: 4px; align-items: center; }
    .out .time { color: #7daca2; right: 12px; bottom: 7px; }
    .line { display: flex; align-items: center; height: 23px; white-space: pre; }
    .tick { margin: 0 4px 0 4px; }
    b { font-weight: 600; }
    .link { color: #7fd9ee; letter-spacing: -0.45px; }
    code { font-family: "DejaVu Sans Mono", monospace; font-size: 16px; letter-spacing: 0; }
    footer { flex: none; height: 62px; box-sizing: border-box; border-top: 1px solid #1b1b1b; border-bottom: 1px solid #1d1d1d; display: flex; align-items: center; padding: 0 32px 2px 26px; }
    .clip { margin-left: 43px; }
    .hint { flex: 1; margin-left: 47px; padding-bottom: 3px; font-size: 17.300px; letter-spacing: -0.52px; color: #cfcfcf; }
    .mic { margin-top: 1px; }
  `;

  render() {
    return html`
      <div class="strip"></div>
      <header>
        <svg width="48" height="48" viewBox="0 0 48 48">
          <circle cx="24" cy="24" r="24" fill="#f22f46"></circle>
          <circle cx="24" cy="24" r="18" fill="#fff"></circle>
          <g fill="#f22f46"><circle cx="18" cy="18" r="5.300"></circle><circle cx="30" cy="18" r="5.300"></circle><circle cx="18" cy="30" r="5.300"></circle><circle cx="30" cy="30" r="5.300"></circle></g>
        </svg>
        <div class="name">+1 (415) 523-8886</div>
        <div class="calls">
          <div class="call"><svg class="icon" width="22" height="18" viewBox="0 0 22 18"><rect x="1.500" y="1.500" width="14" height="15" rx="2"></rect><path d="M15.500 7L20.500 3.500V14.500L15.500 11"></path></svg></div>
          <div class="rule"></div>
          <div class="call"><svg class="icon" width="18" height="22" viewBox="0 0 18 22"><path d="M2.300 3.200C4 1.500 6 .9 7 2.300C8 4 8.300 5 7.800 6.300C7.300 7.500 5.900 7.800 6.100 9.100C6.500 10.900 7.500 12.400 8.800 13.400C10 14.200 11 12.800 12.500 12.900C14 13.200 15.500 14.500 16.300 15.700C17 17 15.800 18.700 14.500 19.800C12.800 21 10.500 20.500 8.600 19.200C4.800 16.500 2.300 12.700 1.200 8.300C.8 6.300 .8 4.700 2.300 3.200Z"></path></svg></div>
        </div>
        <svg class="icon thin" width="21" height="20" viewBox="0 0 21 20"><circle cx="12.500" cy="8" r="6.500"></circle><path d="M7.900 12.600L2.500 18"></path></svg>
      </header>
      <main>
        <chat-wallpaper></chat-wallpaper>
        <div class="pill day">Today</div>
        <div class="pill info">
          <svg width="13" height="13" viewBox="0 0 13 13"><circle cx="6.500" cy="6.500" r="5.800"></circle><path d="M6.500 5.500V10M6.500 3V4.200"></path></svg>
          <span>This business works with other companies to manage this chat. Select to learn more.</span>
        </div>
        <div class="pill biz">This chat is with a business account. Select for more info.</div>
        <div class="msg out">
          <svg class="tail" width="9" height="12" viewBox="0 0 9 12"><path d="M0 0H7Q9 .5 7.500 2L1 10V12H0Z"></path></svg>
          <span>join entirely-available</span>
          <span class="time">19:57<svg width="16" height="10" viewBox="0 0 16 10" fill="none" stroke="#7daca2" stroke-width="1.700"><path d="M.6 5.800L3.600 8.800L9.800 .8M6.800 6.800L8.800 8.800L15 .8"></path></svg></span>
        </div>
        <div class="msg in">
          <svg class="tail" width="8" height="12" viewBox="0 0 8 12"><path d="M8 0H1Q-.8 .5 .8 2L7 10V12H8Z"></path></svg>
          <div class="line"><b>Twilio Sandbox</b>:<svg class="tick" width="21" height="21" viewBox="0 0 21 21" role="img"><defs><linearGradient id="mint" x1="0" y1="0" x2="0" y2="1"><stop offset="0" stop-color="#5fd0a4"></stop><stop offset="1" stop-color="#1d8a62"></stop></linearGradient></defs><rect x=".5" y=".5" width="20" height="20" rx="4" fill="url(#mint)"></rect><path d="M4 10.500L8.500 15L17 6" fill="none" stroke="#fff" stroke-width="2.400" stroke-linecap="round" stroke-linejoin="round"></path></svg><span>You are all set! The sandbox can now send/receive messages from</span></div>
          <div class="line">whatsapp:<span class="link">+14155238886</span>. Reply <code>stop</code> to leave the sandbox any time.</div>
          <span class="time">19:57</span>
        </div>
      </main>
      <footer>
        <svg class="icon bold" width="22" height="22" viewBox="0 0 22 22"><circle cx="11" cy="11" r="9.500"></circle><path d="M6.700 13.700Q11 17.300 15.300 13.700"></path><g fill="#f2f2f2" stroke="none"><circle cx="7.800" cy="8.800" r="1.400"></circle><circle cx="14.200" cy="8.800" r="1.400"></circle></g></svg>
        <svg class="icon clip" width="21" height="22" viewBox="0 0 21 22"><path d="M2.300 11.200L10.300 3.300C12.300 1.300 15 1.200 16.800 3C18.700 4.900 18.500 7.500 16.600 9.400L8.400 17.600C7 19 5 19.200 3.800 17.900C2.600 16.700 2.800 14.900 4 13.600L12 5.700C12.900 4.900 14 4.900 14.700 5.600C15.400 6.300 15.300 7.400 14.500 8.200L7 15.700" transform="translate(-.3 .4)"></path></svg>
        <div class="hint">Type a message</div>
        <svg class="icon bold mic" width="20" height="22" viewBox="0 0 20 22"><rect x="7" y="1.200" width="6.400" height="12" rx="3.200"></rect><path d="M3.500 9.500C3.500 18.500 17 18.500 17 9.500M10.200 16.500V20.500"></path></svg>
      </footer>
    `;
  }
}
